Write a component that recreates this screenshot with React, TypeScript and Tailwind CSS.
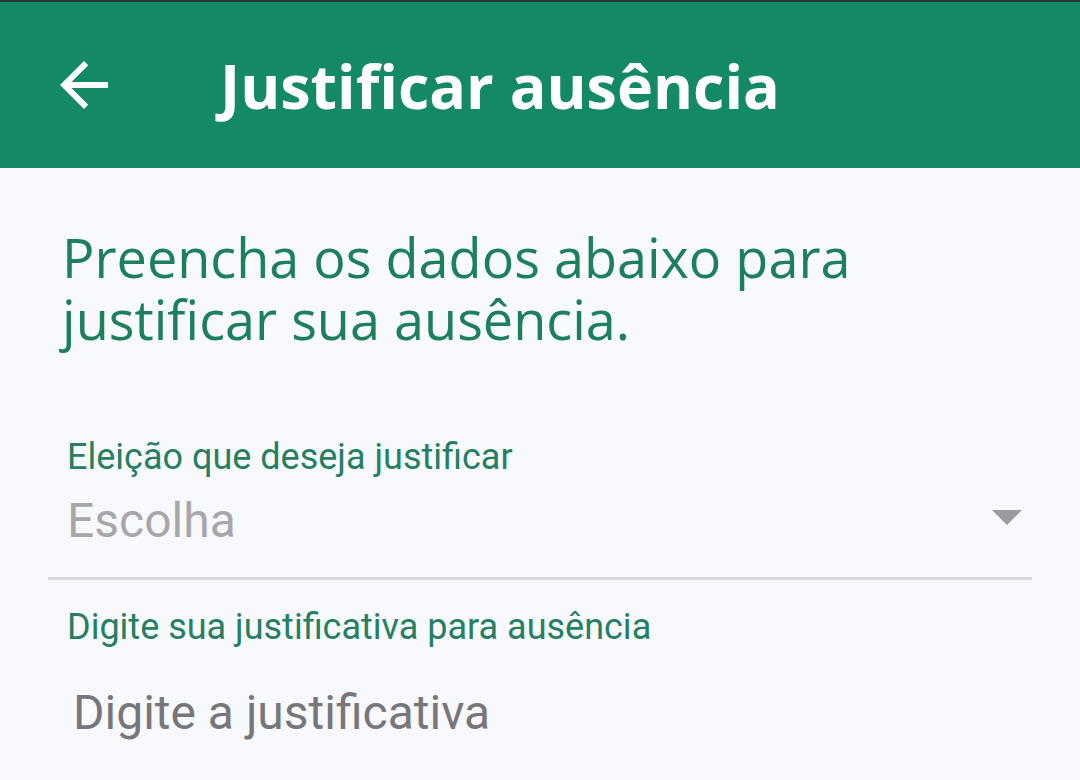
export default function App() {
  return (
    <div className="w-[1080px] h-[780px] overflow-hidden bg-[#f8f9fc]">
      {/* App bar */}
      <header className="h-[168px] bg-[#138a65] border-t-2 border-[#1f3d33] flex items-center">
        <button className="ml-[48px] w-[72px] h-[72px] flex items-center justify-center text-white">
          <svg viewBox="0 0 24 24" width="72" height="72" fill="currentColor">
            <path d="M20 11H7.83l5.59-5.59L12 4l-8 8 8 8 1.41-1.41L7.83 13H20v-2z" />
          </svg>
        </button>
        <h1
          className="ml-[100px] text-[61px] leading-none font-bold text-white"
          style={{ fontFamily: '"Open Sans", sans-serif' }}
        >
          Justificar ausência
        </h1>
      </header>

      <main className="px-[48px]">
        <p
          className="mt-[58px] pl-[14px] text-[54px] leading-[62px] text-[#1c7f5f]"
          style={{ fontFamily: '"Open Sans", sans-serif' }}
        >
          Preencha os dados abaixo para
          <br />
          justificar sua ausência.
        </p>

        <div style={{ fontFamily: 'Roboto, sans-serif' }}>
          {/* Select field */}
          <label className="block mt-[89px] pl-[19px] text-[36px] leading-none text-[#267f61]">
            Eleição que deseja justificar
          </label>
          <div className="mt-[22px] flex items-center justify-between pl-[19px] pr-[10px]">
            <span className="text-[48px] leading-none text-[#a7a7ab]">Escolha</span>
            <svg width="30" height="15" viewBox="0 0 30 15" className="mt-[-8px]">
              <path d="M0 0h30L15 15z" fill="#9b9b9f" />
            </svg>
          </div>
          <div className="mt-[32px] h-[3px] bg-[#d8d8dc]" />

          {/* Text field */}
          <label className="block mt-[29px] pl-[19px] text-[36px] leading-none text-[#267f61]">
            Digite sua justificativa para ausência
          </label>
          <input
            className="block mt-[38px] ml-[25px] w-[900px] h-[60px] bg-transparent outline-none text-[48px] leading-[60px] placeholder:text-[#77777b]"
            placeholder="Digite a justificativa"
          />
        </div>
      </main>
    </div>
  );
}
